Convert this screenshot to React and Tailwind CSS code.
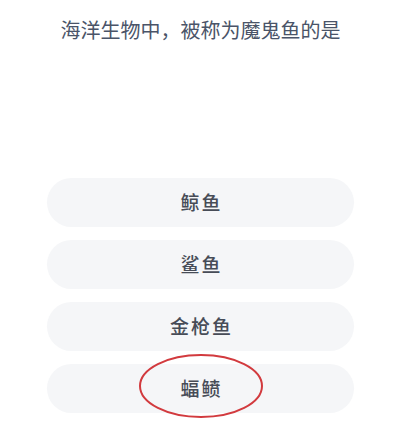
export default function App() {
  const options = ["鲸鱼", "鲨鱼", "金枪鱼", "蝠鲼"];

  return (
    <div
      className="w-[414px] h-[434px] bg-white overflow-hidden pl-[47px] pr-[60px]"
      style={{ fontFamily: '"Noto Sans CJK SC", "Noto Sans", sans-serif' }}
    >
      <div className="pt-[13px] text-center text-[20px] leading-[34px] text-[#4a5468] whitespace-nowrap">
        海洋生物中，被称为魔鬼鱼的是
      </div>

      <div className="mt-[131px] flex flex-col gap-[13px]">
        {options.map((opt, i) => (
          <div
            key={opt}
            className="relative h-[49px] rounded-full bg-[#f5f6f8] flex items-center justify-center text-[19px] tracking-[2px] pl-[2px] font-medium text-[#474c57]"
          >
            {opt}
            {i === 3 && (
              <svg
                className="absolute left-[91px] top-[-11px]"
                width="126"
                height="66"
                viewBox="0 0 126 66"
              >
                <ellipse
                  cx="63"
                  cy="33"
                  rx="61"
                  ry="31"
                  fill="none"
                  stroke="#d23a3e"
                  strokeWidth="2"
                />
              </svg>
            )}
          </div>
        ))}
      </div>
    </div>
  );
}
